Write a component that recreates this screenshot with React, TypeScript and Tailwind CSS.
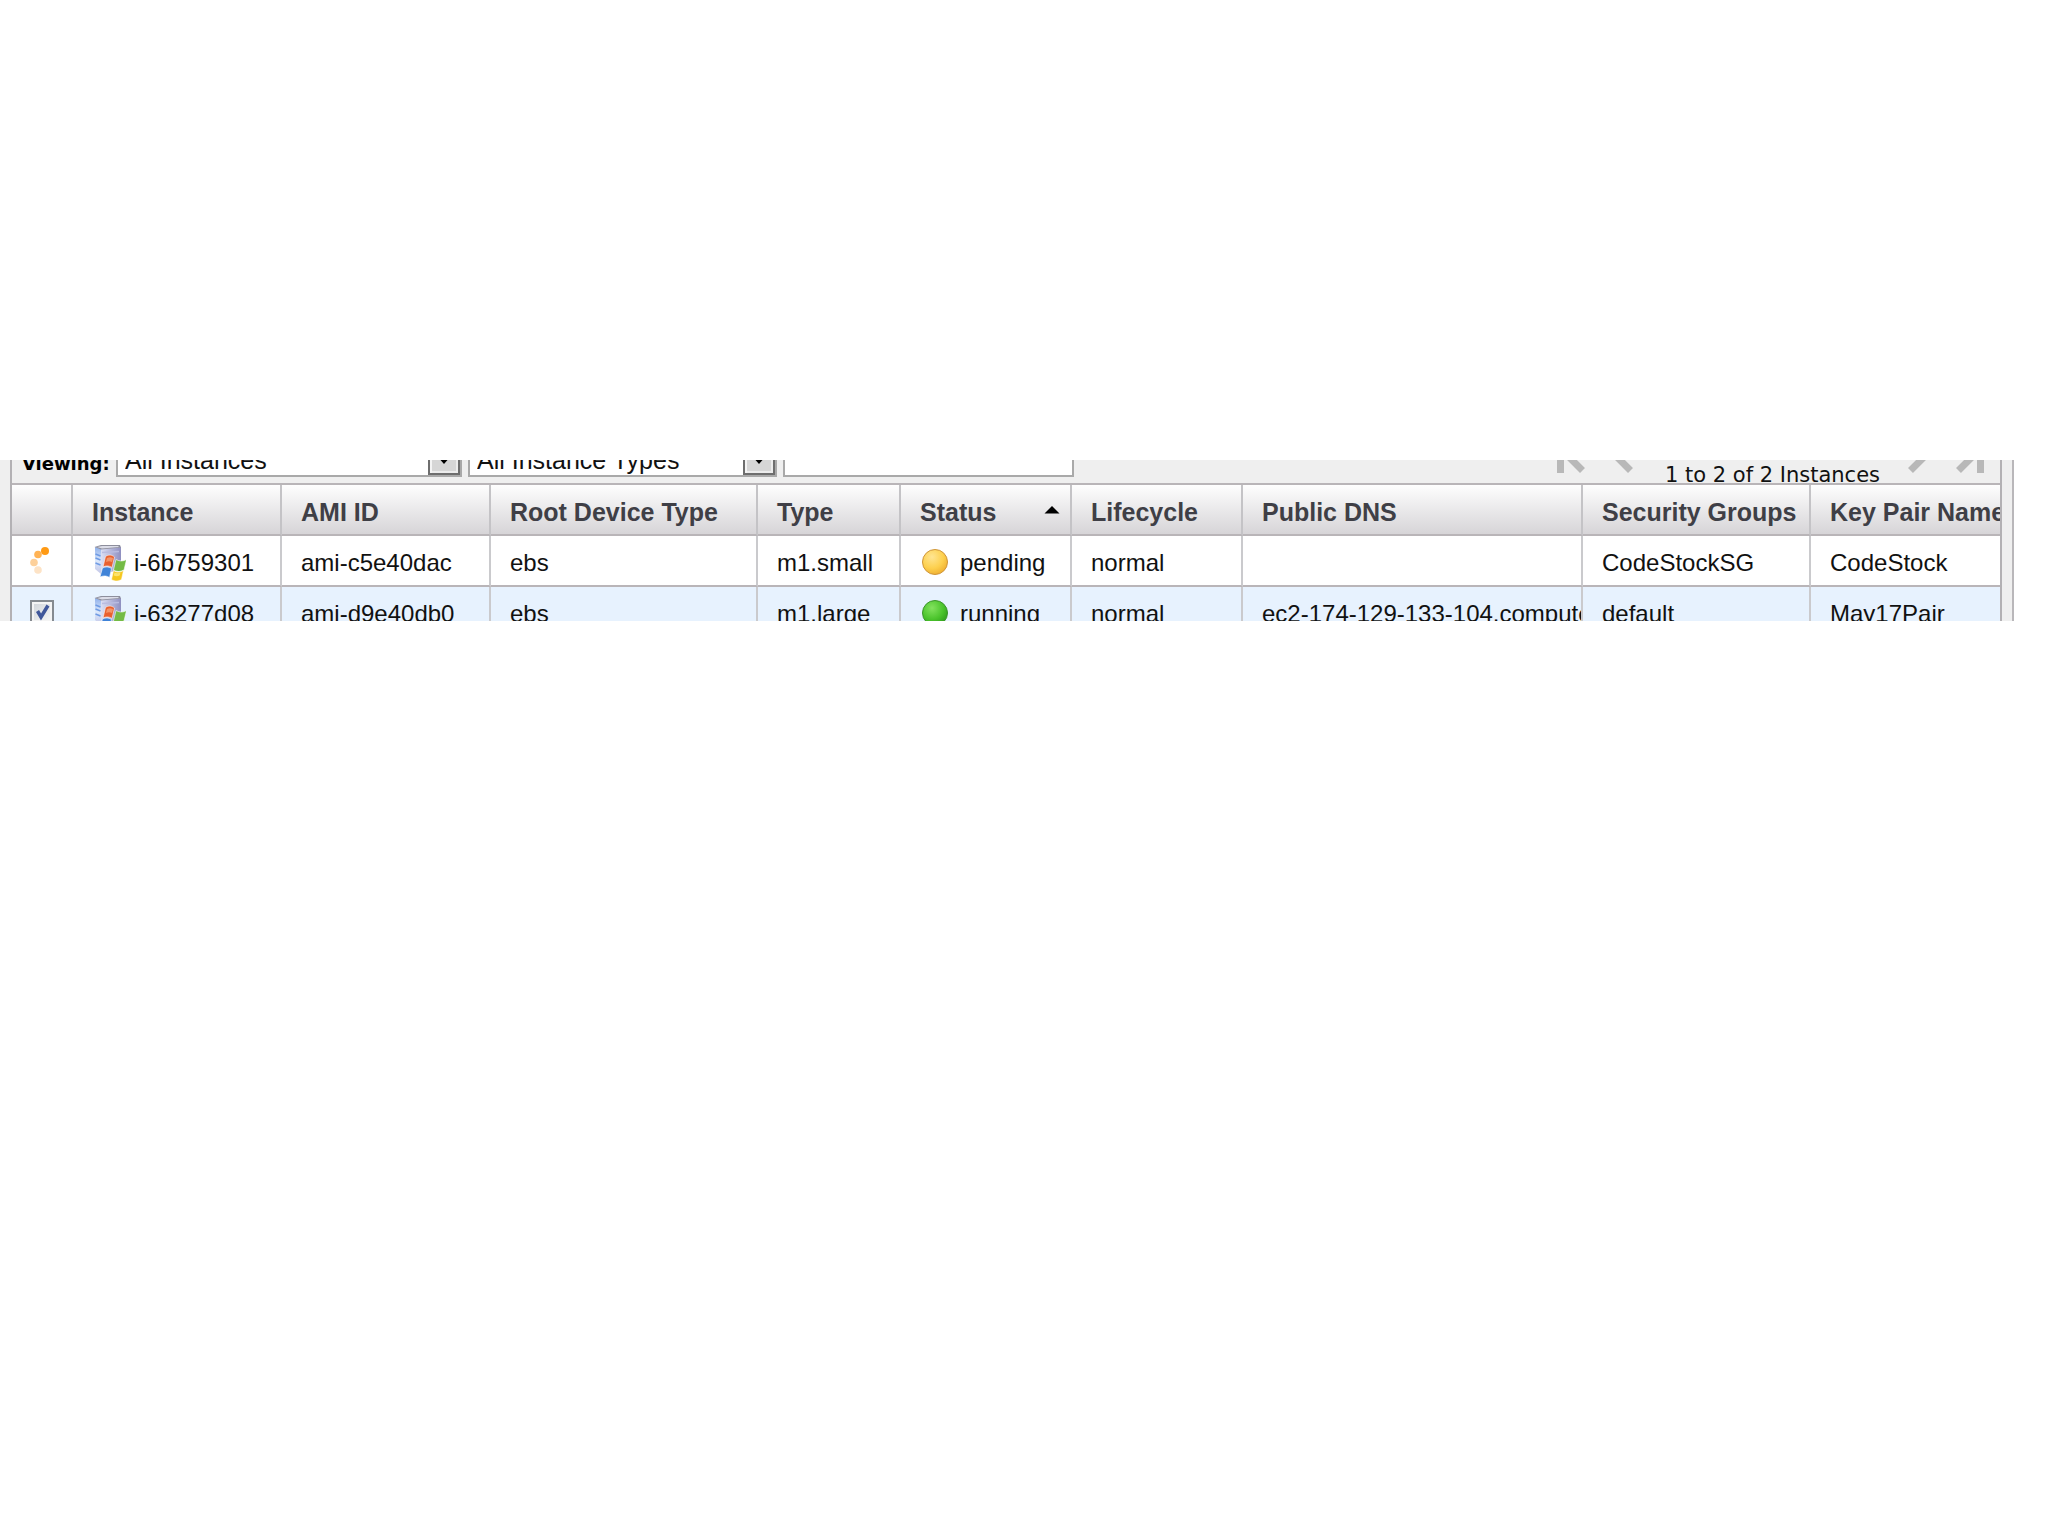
import type { ReactNode } from "react";

type InstanceStatus = "pending" | "running";

type Instance = {
  id: string;
  ami: string;
  rootDevice: string;
  type: string;
  status: InstanceStatus;
  lifecycle: string;
  dns: string;
  groups: string;
  keyPair: string;
};

const instances: Instance[] = [
  {
    id: "i-6b759301",
    ami: "ami-c5e40dac",
    rootDevice: "ebs",
    type: "m1.small",
    status: "pending",
    lifecycle: "normal",
    dns: "",
    groups: "CodeStockSG",
    keyPair: "CodeStock",
  },
  {
    id: "i-63277d08",
    ami: "ami-d9e40db0",
    rootDevice: "ebs",
    type: "m1.large",
    status: "running",
    lifecycle: "normal",
    dns: "ec2-174-129-133-104.compute-1.amazonaws.com",
    groups: "default",
    keyPair: "May17Pair",
  },
];

const columns = [
  { label: "Instance", width: "w-[209px]" },
  { label: "AMI ID", width: "w-[209px]" },
  { label: "Root Device Type", width: "w-[267px]" },
  { label: "Type", width: "w-[143px]" },
  { label: "Status", width: "w-[171px]", sorted: true },
  { label: "Lifecycle", width: "w-[171px]" },
  { label: "Public DNS", width: "w-[340px]" },
  { label: "Security Groups", width: "w-[228px]" },
  { label: "Key Pair Name", width: "" },
];

function SpinnerIcon() {
  return (
    <svg aria-label="Loading" className="mx-auto h-8 w-6" viewBox="0 0 24 32">
      <circle cx="15" cy="6" r="4" fill="#ff9a14" />
      <circle cx="8" cy="9.5" r="3.8" fill="#ffb355" />
      <circle cx="4" cy="17.5" r="3.8" fill="#fdd09a" />
      <circle cx="8" cy="25" r="3.8" fill="#fde3c6" />
    </svg>
  );
}

function WindowsServerIcon() {
  return (
    <svg
      aria-hidden="true"
      className="h-[38px] w-[34px] shrink-0"
      viewBox="0 0 34 38"
    >
      <defs>
        <linearGradient id="tower" x1="0" x2="1" y1="0" y2="0">
          <stop offset="0" stopColor="#dfe4f8" />
          <stop offset="1" stopColor="#8f8fc0" />
        </linearGradient>
        <linearGradient id="front" x1="0" x2="0" y1="0" y2="1">
          <stop offset="0" stopColor="#8fb0ea" />
          <stop offset="0.5" stopColor="#dbe8fc" />
          <stop offset="1" stopColor="#c3c6e6" />
        </linearGradient>
      </defs>
      <path d="M8 5 29 3v23L8 30z" fill="url(#tower)" />
      <path d="M3 3l6 2v25l-6-5z" fill="url(#front)" />
      <path d="M2.5 3 9 1h19l1 2.5L9 5.5z" fill="#8d8e9c" />
      <path d="M5 3 10 2h16l1 1-17 1.5z" fill="#dcdde8" />
      <path d="M3.5 10l5 2M3.5 14l5 2M3.5 19l5 2" stroke="#6f9be4" strokeWidth="1.5" />
      <path d="M10 8.5l17-1" stroke="#b9bce0" strokeWidth="1.5" />
      <g stroke="#ffffff" strokeOpacity="0.7" strokeWidth="0.8">
        <path d="M13.5 12.5c3-2 6-2 9 .5L20 23.500c-3-2-6-2-9-.5z" fill="#e8602f" />
        <path d="M24 15.500c4 2 7 2 10.500 0L32 26c-4 2-7 2-10.500 0z" fill="#74bb45" />
        <path d="M10.500 24c3-1.500 6-1.500 9 .5L17.500 33.500c-3-2-6-2-9.500-.5z" fill="#3f83d8" />
        <path d="M21.500 26.500c3 2 6 2 10 0L29.500 35.500c-3.500 2-6.500 2-10 0z" fill="#f5c71f" />
      </g>
      <path d="M15 14c2-1 4-1 6 0l-1 4c-2-1-4-1-6 0z" fill="#f39468" />
      <path d="M22.500 28.500c2 1 4 1 6 0l-.8 3c-2 1-4 1-6 0z" fill="#fce36c" />
    </svg>
  );
}

function StatusDot({ status }: { status: InstanceStatus }) {
  const pending = status === "pending";

  return (
    <svg aria-hidden="true" className="size-[30px] shrink-0" viewBox="0 0 30 30">
      <defs>
        <radialGradient id={status} cx="0.38" cy="0.3" r="0.75">
          <stop offset="0" stopColor={pending ? "#ffe592" : "#83e25e"} />
          <stop offset="0.6" stopColor={pending ? "#fdd04e" : "#4bc42c"} />
          <stop offset="1" stopColor={pending ? "#efae30" : "#2f9c1c"} />
        </radialGradient>
      </defs>
      <circle
        cx="15"
        cy="14"
        r="12.5"
        fill={`url(#${status})`}
        stroke={pending ? "#cf9538" : "#3a9429"}
      />
    </svg>
  );
}

function FilterSelect({
  label,
  value,
  className,
}: {
  label: string;
  value: string;
  className: string;
}) {
  return (
    <div className={`relative h-9 shrink-0 ${className}`}>
      <select
        id={label}
        aria-label={label}
        className="h-full w-full appearance-none border-2 border-[#a9a9a9] bg-white pt-0.5 pl-[7px] text-[25px] leading-7 text-[#111]"
      >
        <option>{value}</option>
      </select>
      <span className="pointer-events-none absolute inset-y-0.5 right-0.5 flex w-8 items-center justify-center border-2 border-[#6e6e6e] bg-[#d6d6d6] shadow-[inset_2px_2px_0_#f4f4f4,inset_-2px_-2px_0_#ececec]">
        <svg aria-hidden="true" className="h-3 w-4" viewBox="0 0 16 12">
          <path d="M1 3h14l-7 8z" fill="#000" />
        </svg>
      </span>
    </div>
  );
}

function PageButton({
  label,
  flipped = false,
  edge = false,
}: {
  label: string;
  flipped?: boolean;
  edge?: boolean;
}) {
  return (
    <button type="button" aria-label={label}>
      <svg
        aria-hidden="true"
        className={`h-[30px] ${edge ? "w-7" : "w-5"} ${flipped ? "-scale-x-100" : ""}`}
        viewBox={edge ? "0 0 28 30" : "8 0 20 30"}
        fill="none"
        stroke="#b8b8b8"
        strokeWidth="7"
      >
        {edge && <path d="M3.5 0v26" />}
        <path d="M25.500-6 11 9l14.500 14.500" />
      </svg>
    </button>
  );
}

function Cell({ children }: { children?: ReactNode }) {
  return (
    <td className="h-[51px] overflow-hidden border-r-2 border-b-2 border-r-[#cacacd] border-b-[#b9b5b8] pt-[5px] pl-[19px] whitespace-nowrap last:border-r-0">
      {children}
    </td>
  );
}

function Toolbar() {
  return (
    <div className="flex h-[52px] items-end justify-between border-b-2 border-[#b9b5b8]">
      <div className="flex items-end gap-1.5 pb-1.5">
        <label
          htmlFor="Viewing"
          className="w-[98px] shrink-0 pb-1 pl-2.5 font-['DejaVu_Sans',sans-serif] text-[18px] leading-none font-bold text-black"
        >
          Viewing:
        </label>
        <FilterSelect label="Viewing" value="All Instances" className="w-[346px]" />
        <FilterSelect
          label="Instance type"
          value="All Instance Types"
          className="w-[309px]"
        />
        <input
          type="text"
          aria-label="Search"
          className="h-9 w-[291px] border-2 border-[#a9a9a9] bg-white px-2"
        />
      </div>

      <div className="flex items-end pr-4">
        <div className="flex gap-7 pb-1.5">
          <PageButton label="First page" edge />
          <PageButton label="Previous page" />
        </div>
        <p className="pr-7 pl-8 font-['DejaVu_Sans',sans-serif] text-[21px] leading-4 whitespace-nowrap text-[#111]">
          1 to 2 of 2 Instances
        </p>
        <div className="flex gap-7 pb-1.5">
          <PageButton label="Next page" flipped />
          <PageButton label="Last page" flipped edge />
        </div>
      </div>
    </div>
  );
}

function InstanceTable() {
  return (
    <table className="w-full table-fixed border-separate border-spacing-0 text-left text-[24px] leading-7 text-[#111]">
      <thead>
        <tr className="bg-linear-to-b from-[#fefefe] to-[#d5d3d6] text-[25px] text-[#3f3f46]">
          <th
            aria-label="Select"
            className="w-[61px] border-r-2 border-b-2 border-r-[#c4c3c6] border-b-[#b9b5b8]"
          />
          {columns.map((column) => (
            <th
              key={column.label}
              className={`h-[51px] overflow-hidden border-r-2 border-b-2 border-r-[#c4c3c6] border-b-[#b9b5b8] pt-[5px] pl-[19px] font-bold whitespace-nowrap last:border-r-0 ${column.width}`}
            >
              <span className="flex items-center justify-between pr-2.5">
                {column.label}
                {column.sorted && (
                  <svg
                    aria-label="Sorted ascending"
                    className="h-4 w-4"
                    viewBox="0 0 16 16"
                  >
                    <path d="M8 2l7.5 7.5H.5z" fill="#000" />
                  </svg>
                )}
              </span>
            </th>
          ))}
        </tr>
      </thead>
      <tbody>
        {instances.map((instance) => {
          const running = instance.status === "running";

          return (
            <tr key={instance.id} className={running ? "bg-[#e7f2fe]" : "bg-white"}>
              <td className="border-r-2 border-b-2 border-r-[#cacacd] border-b-[#b9b5b8]">
                {running ? (
                  <span className="relative mx-auto block size-6">
                    <input
                      type="checkbox"
                      defaultChecked
                      aria-label={`Select ${instance.id}`}
                      className="block size-6 appearance-none border-2 border-[#858a90] bg-linear-to-br from-[#cfd3d8] to-[#f8f8f8] shadow-[inset_0_0_0_2px_#f4f4f4]"
                    />
                    <svg
                      aria-hidden="true"
                      className="pointer-events-none absolute inset-0 size-6"
                      viewBox="0 0 24 24"
                    >
                      <path
                        d="M7.5 11 11 17 18 5.5"
                        fill="none"
                        stroke="#40579a"
                        strokeWidth="3.5"
                      />
                    </svg>
                  </span>
                ) : (
                  <SpinnerIcon />
                )}
              </td>
              <Cell>
                <span className="flex h-[38px] items-center gap-2">
                  <WindowsServerIcon />
                  {instance.id}
                </span>
              </Cell>
              <Cell>{instance.ami}</Cell>
              <Cell>{instance.rootDevice}</Cell>
              <Cell>{instance.type}</Cell>
              <Cell>
                <span className="flex items-center gap-2.5">
                  <StatusDot status={instance.status} />
                  {instance.status}
                </span>
              </Cell>
              <Cell>{instance.lifecycle}</Cell>
              <Cell>{instance.dns}</Cell>
              <Cell>{instance.groups}</Cell>
              <Cell>{instance.keyPair}</Cell>
            </tr>
          );
        })}
      </tbody>
    </table>
  );
}

export default function App() {
  return (
    <main className="min-h-screen bg-white pt-[460px] pr-[34px] font-['Liberation_Sans',Arial,sans-serif]">
      {/* Short viewport onto the panel, so the toolbar and last row run past its edges */}
      <div className="h-[161px] overflow-hidden border-r-2 border-[#b9b7ba] bg-[#efefef] px-2.5">
        <section
          aria-label="Instances"
          className="-mt-[27px] border-x-2 border-[#b3b1b4]"
        >
          <Toolbar />
          <InstanceTable />
        </section>
      </div>
    </main>
  );
}
